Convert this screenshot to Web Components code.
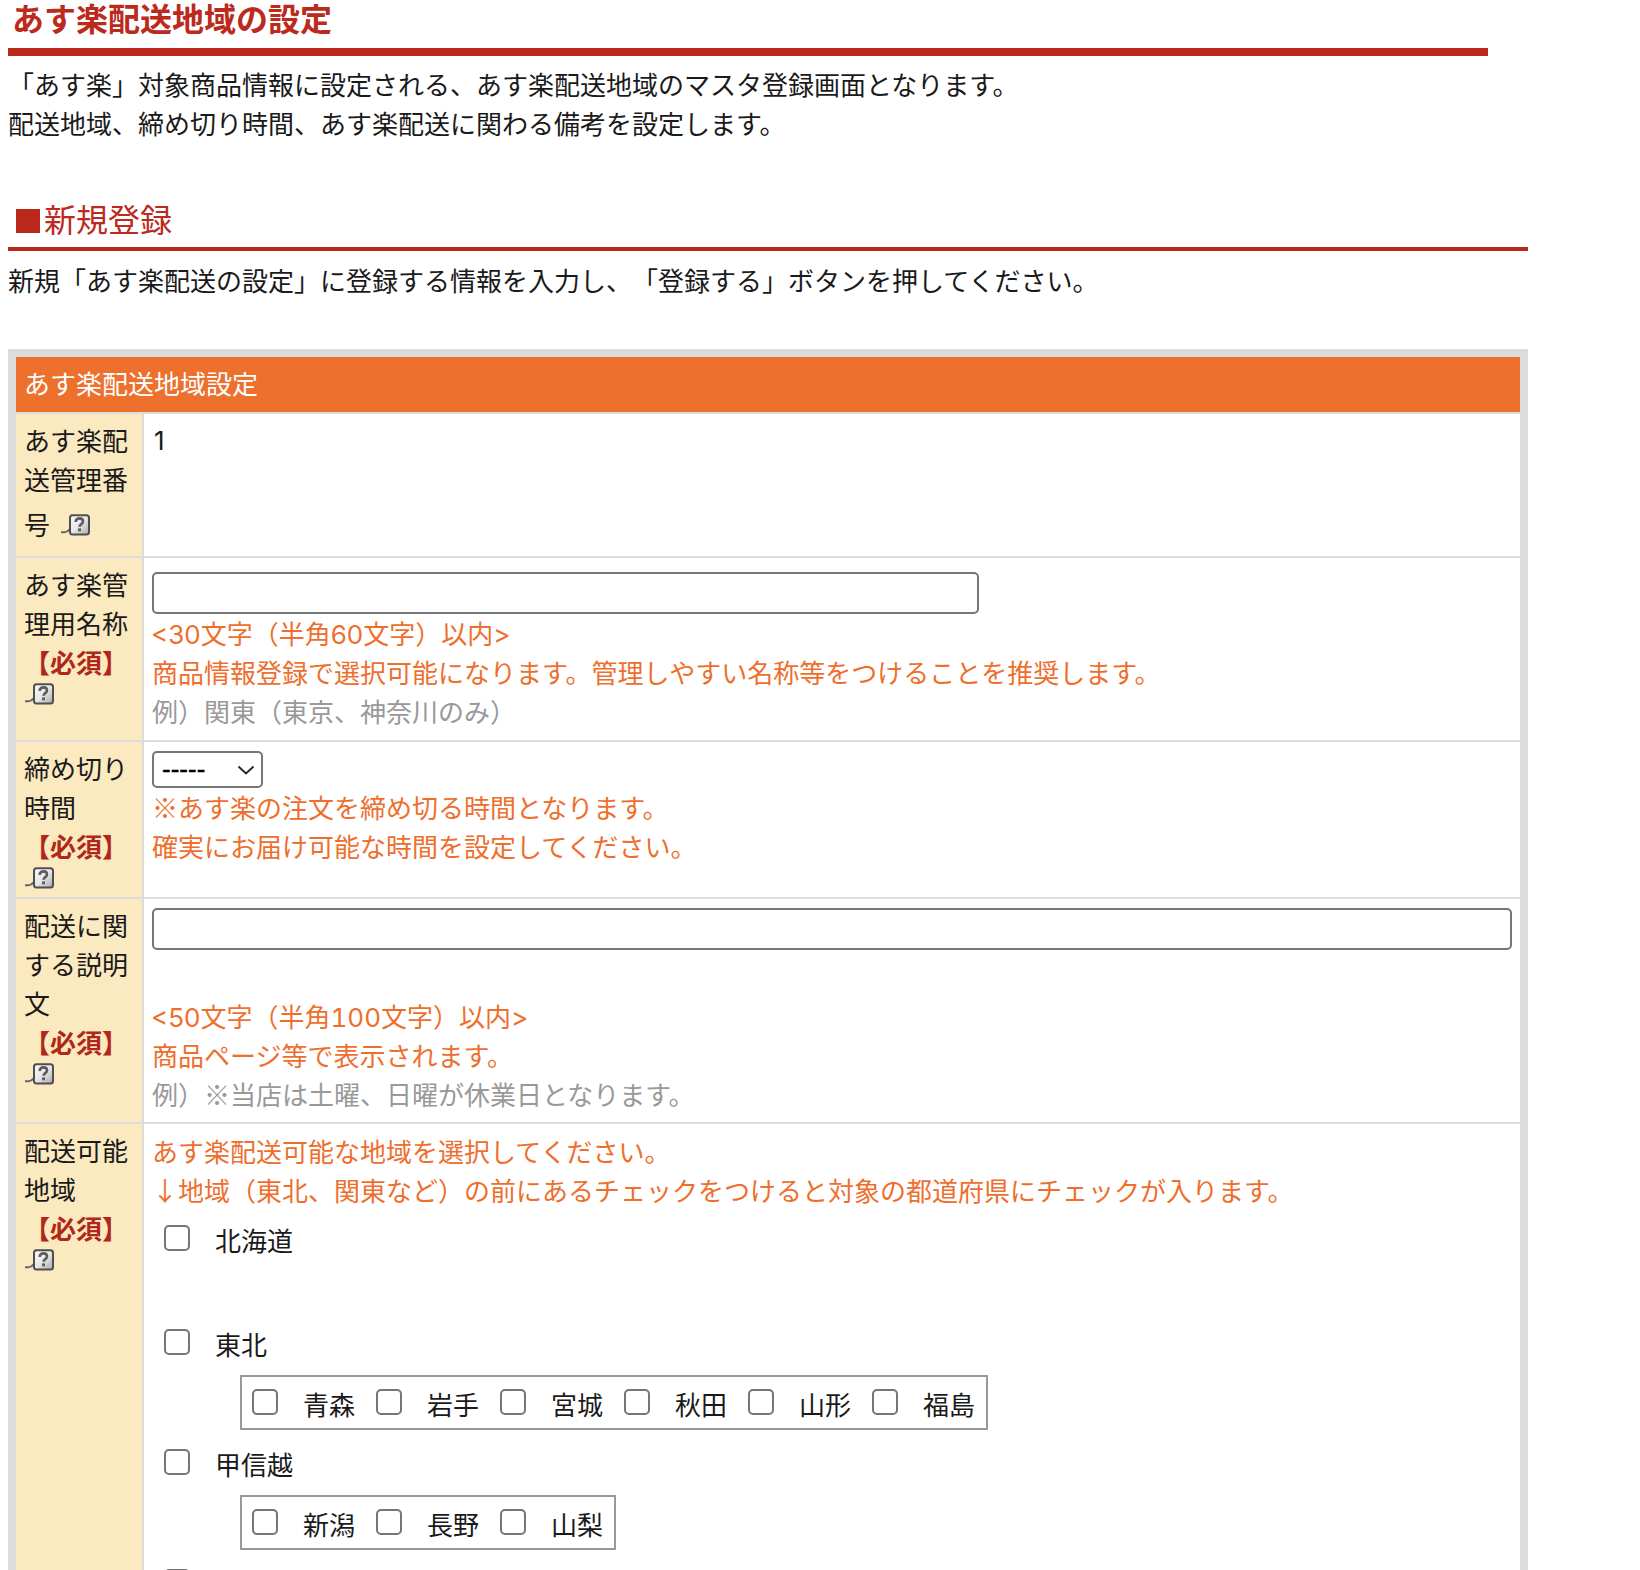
<!DOCTYPE html>
<html lang="ja">
<head>
<meta charset="utf-8">
<title>あす楽配送地域の設定</title>
<style>
html,body{height:1570px;overflow:hidden;background:#fff}
body{margin:0 0 0 8px;width:1624px;color:#1a1a1a;font:26px/39px "Noto Sans CJK JP","Noto Sans",sans-serif;text-spacing-trim:space-all}
.lat{font-family:Inter,"Noto Sans",sans-serif;line-height:1}
.lead{margin-left:-1px}
.tnum{font-variant-numeric:tabular-nums}
</style>
</head>
<body>
<page-title>あす楽配送地域の設定</page-title>
<intro-text><div>「あす楽」対象商品情報に設定される、あす楽配送地域のマスタ登録画面となります。</div><div>配送地域、締め切り時間、あす楽配送に関わる備考を設定します。</div></intro-text>
<section-title>新規登録</section-title>
<lead-text>新規「あす楽配送の設定」に登録する情報を入力し、「登録する」ボタンを押してください。</lead-text>
<settings-panel heading="あす楽配送地域設定">
  <form-row>
    <span slot="label">あす楽配送管理番号<help-icon inline></help-icon></span>
    <div class="lat" style="line-height:39px;padding:1px 0 0 2px">1</div>
  </form-row>
  <form-row>
    <span slot="label">あす楽管理用名称<req-mark></req-mark><help-icon></help-icon></span>
    <text-field width="827" before="8" after="-1"></text-field>
    <note-line><span class="lat lead">&lt;30</span>文字（半角<span class="lat">60</span>文字）以内<span class="lat">&gt;</span></note-line>
    <note-line>商品情報登録で選択可能になります。管理しやすい名称等をつけることを推奨します。</note-line>
    <note-line tone="example">例）関東（東京、神奈川のみ）</note-line>
  </form-row>
  <form-row>
    <span slot="label">締め切り時間<req-mark></req-mark><help-icon></help-icon></span>
    <select-box>-----</select-box>
    <note-line>※あす楽の注文を締め切る時間となります。</note-line>
    <note-line>確実にお届け可能な時間を設定してください。</note-line>
  </form-row>
  <form-row>
    <span slot="label">配送に関する説明文<req-mark></req-mark><help-icon></help-icon></span>
    <text-field width="1360" before="3" after="46"></text-field>
    <note-line><span class="lat lead">&lt;50</span>文字（半角<span class="lat tnum">100</span>文字）以内<span class="lat">&gt;</span></note-line>
    <note-line>商品ページ等で表示されます。</note-line>
    <note-line tone="example" style="margin-bottom:-1px">例）※当店は土曜、日曜が休業日となります。</note-line>
  </form-row>
  <form-row>
    <span slot="label">配送可能地域<req-mark></req-mark><help-icon></help-icon></span>
    <note-line style="margin-top:1px">あす楽配送可能な地域を選択してください。</note-line>
    <note-line>↓地域（東北、関東など）の前にあるチェックをつけると対象の都道府県にチェックが入ります。</note-line>
    <region-group name="北海道" style="--before:11px;--after:65px"></region-group>
    <region-group name="東北">
      <pref-item>青森</pref-item><pref-item>岩手</pref-item><pref-item>宮城</pref-item><pref-item>秋田</pref-item><pref-item>山形</pref-item><pref-item>福島</pref-item>
    </region-group>
    <region-group name="甲信越">
      <pref-item>新潟</pref-item><pref-item>長野</pref-item><pref-item>山梨</pref-item>
    </region-group>
    <region-group></region-group>
  </form-row>
</settings-panel>

<script>
const def = (name, html) => customElements.define(name, class extends HTMLElement{
  constructor(){ super(); this.attachShadow({mode:'open'}).innerHTML = typeof html === 'function' ? html(this) : html; }
});

def('page-title', `<style>
:host{display:block;width:1480px;height:56px;box-sizing:border-box;border-bottom:8px solid #b9281b;padding-left:4px;color:#bb2a1d;font-size:32px;font-weight:700;line-height:34px}
</style><slot></slot>`);

def('intro-text', `<style>:host{display:block;margin-top:8px}</style><slot></slot>`);

def('section-title', `<style>
:host{display:block;width:1520px;margin-top:56px;height:53px;box-sizing:border-box;border-bottom:4px solid #b9281b;color:#bb2a1d;font-size:32px;line-height:41px;padding-left:8px}
.box{display:inline-block;width:24px;height:24px;background:#b9281b;margin-right:4px;vertical-align:-1px}
</style><span class="box"></span><slot></slot>`);

def('lead-text', `<style>:host{display:block;margin-top:9px}</style><slot></slot>`);

def('settings-panel', el => `<style>
:host{display:block;width:1520px;box-sizing:border-box;margin-top:50px;height:1300px;padding:8px 8px 0;background:#dcdcdc}
.head{height:55px;background:#ed702d;color:#fff;padding-left:8px;line-height:52px;margin-bottom:2px}
.rows{display:grid;gap:2px}
</style><div class="head">${el.getAttribute('heading')||''}</div><div class="rows"><slot></slot></div>`);

def('form-row', `<style>
:host{display:grid;grid-template-columns:126px 1fr;column-gap:2px}
.label{background:#fbe9bf;padding:6px 14px 8px 8px;min-width:0;word-break:break-all}
.body{background:#fff;padding:6px 8px 10px 8px;min-width:0}
:host(:last-child) .label,:host(:last-child) .body{min-height:1000px}
</style><div class="label"><slot name="label"></slot></div><div class="body"><slot></slot></div>`);

def('req-mark', `<style>:host{display:block;white-space:nowrap;color:#b0281a;font-weight:700}</style>【必須】`);

def('help-icon', `<style>
:host{display:block;width:30px;height:22px;margin-top:2px}
:host([inline]){display:inline-block;margin:16px 0 12px 10px;vertical-align:-13px}
svg{display:block}
</style>
<svg width="30" height="22" viewBox="0 0 30 22" aria-hidden="true">
<defs><linearGradient id="g" x1="0" y1="0" x2="1" y2="1"><stop offset="0" stop-color="#fafafa"/><stop offset=".5" stop-color="#e8e8e8"/><stop offset="1" stop-color="#a8a8a8"/></linearGradient></defs>
<path d="M1 18.2h3.5c1.8 0 3.4-.9 5.5-3" fill="none" stroke="#666" stroke-width="2"/>
<rect x="10" y="1.2" width="19" height="19.3" rx="2.5" fill="url(#g)" stroke="#4f4f4f" stroke-width="2"/>
<path d="M15.7 8c0-2.3 1.6-3.6 3.8-3.6s3.5 1.2 3.5 3c0 2.8-3.4 2.6-3.4 5.4" fill="none" stroke="#5c5c5c" stroke-width="2.6"/>
<rect x="18.1" y="14.4" width="2.9" height="2.9" fill="#5c5c5c"/>
</svg>`);

def('text-field', el => `<style>
:host{display:block;margin:${el.getAttribute('before')}px 0 ${el.getAttribute('after')}px}
input{display:block;box-sizing:border-box;width:${el.getAttribute('width')}px;height:42px;margin:0;border:2px solid #767676;border-radius:5px;background:#fff;outline:0;padding:0 8px;font:inherit}
</style><input type="text">`);

def('select-box', `<style>
:host{display:flex;align-items:center;justify-content:space-between;box-sizing:border-box;width:111px;height:37px;margin:3px 0 -1px;border:2px solid #767676;border-radius:5px;padding:0 6px 0 8px;background:#fff;color:#000;font:26px/33px "Liberation Sans",sans-serif;-webkit-text-stroke:.4px #000}
svg{display:block}
</style><span><slot></slot></span><svg width="18" height="10" viewBox="0 0 18 10" aria-hidden="true"><path d="M1.5 1.5l7.5 7 7.5-7" fill="none" stroke="#222" stroke-width="1.8"/></svg>`);

def('note-line', el => `<style>
:host{display:block;color:${el.getAttribute('tone')==='example' ? '#999' : '#ee6f2d'}}
</style><slot></slot>`);

def('check-mark', `<style>
:host{display:block;flex:none;width:26px;height:26px}
input{display:block;appearance:none;box-sizing:border-box;width:26px;height:26px;margin:0;border:2px solid #767676;border-radius:5px;background:#fff}
</style><input type="checkbox">`);

def('region-group', () => `<style>
:host{display:block;padding:var(--before,0) 0 var(--after,14px) 12px}
.top{display:flex;align-items:flex-start;column-gap:25px;height:39px}
check-mark{margin-top:5px}
.sub{display:none;width:max-content;box-sizing:border-box;height:55px;margin:12px 0 0 76px;border:2px solid #999;padding:7px 11px 0 10px}
.sub.on{display:flex}
</style><div class="top"><check-mark></check-mark><span></span></div><div class="sub"><slot></slot></div>`);

def('pref-item', `<style>
:host{display:flex;align-items:flex-start;column-gap:25px;height:39px;margin-right:21px}
:host(:last-child){margin-right:0}
check-mark{margin-top:5px}
</style><check-mark></check-mark><span><slot></slot></span>`);

document.querySelectorAll('region-group').forEach(g => {
  g.shadowRoot.querySelector('.top span').textContent = g.getAttribute('name') || '';
  if(g.children.length) g.shadowRoot.querySelector('.sub').classList.add('on');
});
</script>
</body>
</html>
